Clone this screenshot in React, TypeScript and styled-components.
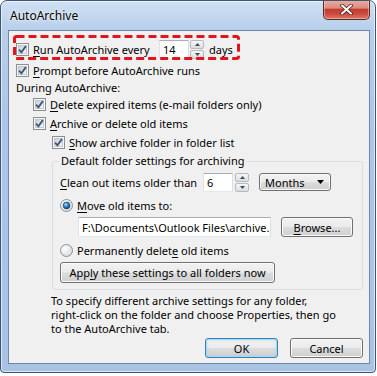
import React from "react"
import styled, { createGlobalStyle } from "styled-components"

const UI_FONT = `"Noto Sans", "Open Sans", sans-serif`

const GlobalStyle = createGlobalStyle`
  html, body {
    margin: 0;
    padding: 0;
    background: #ffffff;
  }

  body {
    color: #000000;
    font-family: ${ UI_FONT };
    font-size: 11px;
  }

  u {
    text-decoration: underline;
    text-underline-offset: 2px;
    text-decoration-thickness: 1px;
  }
`

// Window frame
const Window = styled.div`
  background: linear-gradient( 180deg, #cfe0f3 0px, #b8cfeb 28px, #adc6e7 120px, #a9c3e5 100% );
  border: 1px solid #3e5676;
  border-radius: 7px 7px 4px 4px;
  box-shadow: inset 0 0 0 1px rgba( 255, 255, 255, 0.6 );
  box-sizing: border-box;
  display: flex;
  flex-direction: column;
  height: 373px;
  overflow: hidden;
  width: 376px;
`

const TitleBar = styled.div`
  align-items: flex-start;
  display: flex;
  flex-shrink: 0;
  height: 29px;
  padding: 0 5px 0 9px;
`

const Title = styled.div`
  font-size: 12px;
  line-height: 29px;
  text-shadow: 0 0 6px rgba( 255, 255, 255, 0.9 ), 0 0 2px rgba( 255, 255, 255, 0.9 );
`

const CloseButton = styled.div`
  align-items: center;
  background: linear-gradient( 180deg, #eab0a4 0%, #dd8a7c 42%, #c43c31 50%, #c9493d 72%, #de7a68 100% );
  border: 1px solid #5b2a27;
  border-radius: 0 0 5px 5px;
  border-top: none;
  box-shadow: inset 0 0 0 1px rgba( 255, 220, 210, 0.45 );
  box-sizing: border-box;
  display: flex;
  height: 20px;
  justify-content: center;
  margin-left: auto;
  margin-top: -1px;
  width: 47px;
`

const Client = styled.div`
  background: #f0f0f0;
  border: 1px solid #6f87a8;
  box-sizing: border-box;
  display: flex;
  flex: none;
  flex-direction: column;
  height: 334px;
  margin: 0 5px 0 7px;
  padding: 7px 6px 5px 7px;
`

// Rows
const Row = styled.div<{ $h: number, $indent?: number, $top?: number }>`
  align-items: center;
  display: flex;
  flex: none;
  height: ${ ( p ) => p.$h }px;
  margin-left: ${ ( p ) => p.$indent ?? 0 }px;
  margin-top: ${ ( p ) => p.$top ?? 0 }px;
`

const HighlightRow = styled( Row )`
  position: relative;
  width: 223px;
`

const HighlightMark = styled.svg`
  left: -3px;
  pointer-events: none;
  position: absolute;
  top: -3px;
`

const Label = styled.label<{ $w?: number }>`
  align-items: center;
  display: inline-flex;
  flex: none;
  gap: 4px;
  white-space: nowrap;
  width: ${ ( p ) => ( p.$w ? `${ p.$w }px` : "auto" ) };
`

const Caption = styled.span<{ $gap?: number }>`
  margin-left: ${ ( p ) => p.$gap ?? 0 }px;
  white-space: nowrap;
`

// Inputs
const EditBox = styled.div<{ $w: number, $h?: number }>`
  align-items: center;
  background: #ffffff;
  border: 1px solid;
  border-color: #abadb3 #dbdfe6 #e3e9ef #e2e3ea;
  box-sizing: border-box;
  display: flex;
  flex: none;
  height: ${ ( p ) => p.$h ?? 19 }px;
  padding: 0 3px;
  white-space: nowrap;
  width: ${ ( p ) => p.$w }px;
`

const Spinner = styled.div<{ $gap?: number }>`
  display: flex;
  flex: none;
  flex-direction: column;
  gap: 1px;
  height: 19px;
  margin-left: ${ ( p ) => p.$gap ?? 1 }px;
  width: 14px;
`

const SpinHalf = styled.div`
  align-items: center;
  background: linear-gradient( 180deg, #f7f7f7 0%, #e9e9e9 50%, #dcdcdc 100% );
  border: 1px solid #b5bac1;
  border-radius: 2px;
  box-sizing: border-box;
  display: flex;
  flex: 1;
  justify-content: center;
`

const PushButton = styled.div<{ $w: number, $h?: number, $default?: boolean, $gap?: number }>`
  align-items: center;
  background: linear-gradient( 180deg, #f2f2f2 0%, #ebebeb 49%, #dddddd 51%, #cfcfcf 100% );
  border: 1px solid ${ ( p ) => ( p.$default ? "#3c7fb1" : "#707070" ) };
  border-radius: 3px;
  box-shadow: ${ ( p ) => ( p.$default
    ? "inset 0 0 0 1px #9fdcf5, inset 0 0 3px 1px rgba( 120, 200, 240, 0.35 )"
    : "inset 0 0 0 1px #fbfbfb" ) };
  box-sizing: border-box;
  display: flex;
  flex: none;
  height: ${ ( p ) => p.$h ?? 20 }px;
  justify-content: center;
  margin-left: ${ ( p ) => p.$gap ?? 0 }px;
  white-space: nowrap;
  width: ${ ( p ) => p.$w }px;
`

const Combo = styled( PushButton )`
  justify-content: space-between;
  padding: 0 6px 0 5px;
`

// Group box
const GroupBox = styled.fieldset`
  border: 1px solid #d5dfe5;
  border-radius: 3px;
  display: flex;
  flex: none;
  flex-direction: column;
  margin: 0 0 0 36px;
  min-inline-size: 0;
  padding: 0 6px 6px 7px;
`

const GroupTitle = styled.legend`
  line-height: 18px;
  margin-left: -1px;
  padding: 0 2px;
`

const Note = styled.p`
  line-height: 14px;
  margin: 4px 0 0 35px;
`

const ButtonBar = styled.div`
  display: flex;
  flex: none;
  gap: 12px;
  justify-content: flex-end;
  margin-top: 2px;
`

const CheckBox: React.FunctionComponent<{ checked?: boolean }> = ( { checked } ) => (
  <svg width="13" height="13" viewBox="0 0 13 13">
    <defs>
      <linearGradient id="cb-fill" x1="0" y1="0" x2="1" y2="1">
        <stop offset="0" stopColor="#c9ced6" />
        <stop offset="1" stopColor="#f8f8f8" />
      </linearGradient>
    </defs>
    <rect x="0.5" y="0.5" width="12" height="12" fill="#f6f6f6" stroke="#8e8f8f" />
    <rect x="2.5" y="2.5" width="8" height="8" fill="url(#cb-fill)" stroke="#b8bec6" strokeWidth="0.8" />
    { checked && <path d="M3.1 6.7 L5.4 9.3 L9.9 3.1" fill="none" stroke="#3f557c" strokeWidth="1.8" /> }
  </svg>
)

const RadioBox: React.FunctionComponent<{ checked?: boolean }> = ( { checked } ) => (
  <svg width="13" height="13" viewBox="0 0 13 13">
    <defs>
      <radialGradient id="rb-fill" cx="0.35" cy="0.35" r="0.8">
        <stop offset="0" stopColor="#ffffff" />
        <stop offset="1" stopColor="#cfd3da" />
      </radialGradient>
      <radialGradient id="rb-dot" cx="0.4" cy="0.35" r="0.7">
        <stop offset="0" stopColor="#b6e2ff" />
        <stop offset="0.45" stopColor="#2f86cf" />
        <stop offset="1" stopColor="#133a66" />
      </radialGradient>
    </defs>
    <circle cx="6.5" cy="6.5" r="6" fill="url(#rb-fill)" stroke="#8e8f8f" />
    { checked && <circle cx="6.5" cy="6.5" r="3.4" fill="url(#rb-dot)" stroke="#1b3a5e" strokeWidth="0.6" /> }
  </svg>
)

const SpinBox: React.FunctionComponent<{ value: string, gap?: number }> = ( { value, gap } ) => (
  <>
    <EditBox $w={ 30 }>{ value }</EditBox>
    <Spinner $gap={ gap }>
      <SpinHalf>
        <svg width="5" height="3" viewBox="0 0 5 3"><path d="M0 3 L2.5 0 L5 3 Z" fill="#3e4c5e" /></svg>
      </SpinHalf>
      <SpinHalf>
        <svg width="5" height="3" viewBox="0 0 5 3"><path d="M0 0 L2.5 3 L5 0 Z" fill="#3e4c5e" /></svg>
      </SpinHalf>
    </Spinner>
  </>
)

export default function App() {
  return (
    <>
      <GlobalStyle />
      <Window>
        <TitleBar>
          <Title>AutoArchive</Title>
          <CloseButton>
            <svg width="13" height="11" viewBox="0 0 13 11">
              <path d="M2 1.5 L11 9.5 M11 1.5 L2 9.5" stroke="#4a2220" strokeWidth="3.6" strokeLinecap="round" />
              <path d="M2 1.5 L11 9.5 M11 1.5 L2 9.5" stroke="#ffffff" strokeWidth="2" strokeLinecap="round" />
            </svg>
          </CloseButton>
        </TitleBar>
        <Client>
          <HighlightRow $h={ 22 }>
            <Label $w={ 143 }><CheckBox checked /><span><u>R</u>un AutoArchive every</span></Label>
            <SpinBox value="14" />
            <Caption $gap={ 5 }>days</Caption>
            <HighlightMark width="227" height="25" viewBox="0 0 227 25">
              <rect x="1.5" y="1.5" width="224" height="22" rx="2" fill="none" stroke="#e2141c" strokeWidth="3" strokeDasharray="8 4" />
            </HighlightMark>
          </HighlightRow>
          <Row $h={ 20 }>
            <Label><CheckBox checked /><span><u>P</u>rompt before AutoArchive runs</span></Label>
          </Row>
          <Row $h={ 15 }>
            <Caption>During AutoArchive:</Caption>
          </Row>
          <Row $h={ 19 } $indent={ 17 }>
            <Label><CheckBox checked /><span><u>D</u>elete expired items (e-mail folders only)</span></Label>
          </Row>
          <Row $h={ 18 } $indent={ 17 }>
            <Label><CheckBox checked /><span><u>A</u>rchive or delete old items</span></Label>
          </Row>
          <Row $h={ 20 } $indent={ 36 }>
            <Label><CheckBox checked /><span><u>S</u>how archive folder in folder list</span></Label>
          </Row>
          <GroupBox>
            <GroupTitle>Default folder settings for archiving</GroupTitle>
            <Row $h={ 20 } $top={ 2 }>
              <Label $w={ 143 }><span><u>C</u>lean out items older than</span></Label>
              <SpinBox value="6" gap={ 2 } />
              <Combo $w={ 72 } $h={ 18 } $gap={ 10 }>
                <span>Months</span>
                <svg width="7" height="4" viewBox="0 0 7 4"><path d="M0 0 L7 0 L3.5 4 Z" fill="#000000" /></svg>
              </Combo>
            </Row>
            <Row $h={ 20 } $top={ 3 }>
              <Label><RadioBox checked /><span><u>M</u>ove old items to:</span></Label>
            </Row>
            <Row $h={ 24 } $indent={ 18 }>
              <EditBox $w={ 193 } $h={ 20 }>F:\Documents\Outlook Files\archive.</EditBox>
              <PushButton $w={ 72 } $gap={ 10 }><span><u>B</u>rowse...</span></PushButton>
            </Row>
            <Row $h={ 23 }>
              <Label><RadioBox /><span>Permanently delet<u>e</u> old items</span></Label>
            </Row>
            <PushButton $w={ 215 } $h={ 21 }><span>App<u>l</u>y these settings to all folders now</span></PushButton>
          </GroupBox>
          <Note>
            To specify different archive settings for any folder,<br />
            right-click on the folder and choose Properties, then go<br />
            to the AutoArchive tab.
          </Note>
          <ButtonBar>
            <PushButton $w={ 73 } $default>OK</PushButton>
            <PushButton $w={ 73 }>Cancel</PushButton>
          </ButtonBar>
        </Client>
      </Window>
    </>
  )
}
